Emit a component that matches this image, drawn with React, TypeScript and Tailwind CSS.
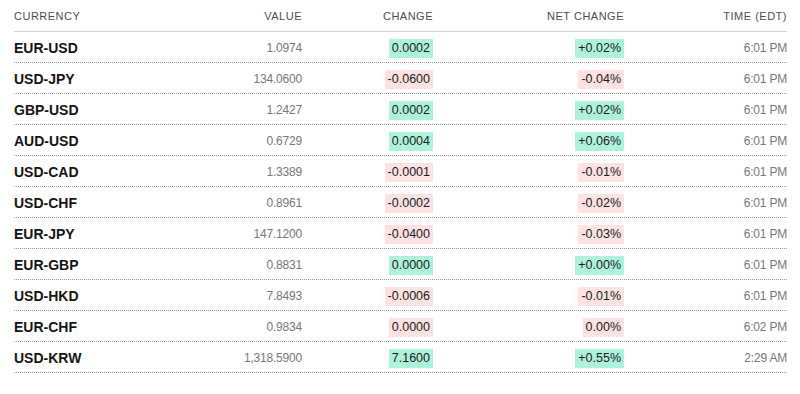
import React from "react";

type Row = {
  pair: string;
  value: string;
  change: string;
  net: string;
  time: string;
  up: boolean;
};

const rows: Row[] = [
  { pair: "EUR-USD", value: "1.0974", change: "0.0002", net: "+0.02%", time: "6:01 PM", up: true },
  { pair: "USD-JPY", value: "134.0600", change: "-0.0600", net: "-0.04%", time: "6:01 PM", up: false },
  { pair: "GBP-USD", value: "1.2427", change: "0.0002", net: "+0.02%", time: "6:01 PM", up: true },
  { pair: "AUD-USD", value: "0.6729", change: "0.0004", net: "+0.06%", time: "6:01 PM", up: true },
  { pair: "USD-CAD", value: "1.3389", change: "-0.0001", net: "-0.01%", time: "6:01 PM", up: false },
  { pair: "USD-CHF", value: "0.8961", change: "-0.0002", net: "-0.02%", time: "6:01 PM", up: false },
  { pair: "EUR-JPY", value: "147.1200", change: "-0.0400", net: "-0.03%", time: "6:01 PM", up: false },
  { pair: "EUR-GBP", value: "0.8831", change: "0.0000", net: "+0.00%", time: "6:01 PM", up: true },
  { pair: "USD-HKD", value: "7.8493", change: "-0.0006", net: "-0.01%", time: "6:01 PM", up: false },
  { pair: "EUR-CHF", value: "0.9834", change: "0.0000", net: "0.00%", time: "6:02 PM", up: false },
  { pair: "USD-KRW", value: "1,318.5900", change: "7.1600", net: "+0.55%", time: "2:29 AM", up: true },
];

const grid = "grid grid-cols-[150px_138px_131px_191px_163px]";

function Badge({ text, up }: { text: string; up: boolean }) {
  return (
    <span
      className={
        "inline-flex h-[19px] items-center px-[3px] text-[12.5px] leading-none text-[#1a1a1a] " +
        (up ? "bg-[#adf2dc]" : "bg-[#fce2e2]")
      }
    >
      {text}
    </span>
  );
}

export default function App() {
  return (
    <div
      className="w-[800px] h-[394px] bg-white pl-[14px] pr-[13px]"
      style={{ fontFamily: '"Liberation Sans", Arial, sans-serif' }}
    >
      <div className={grid + " h-[32px] items-center pt-[2px] border-b border-[#d4d4d4] text-[11px] tracking-[0.5px] text-[#4d4d4d]"}>
        <div>CURRENCY</div>
        <div className="text-right">VALUE</div>
        <div className="text-right">CHANGE</div>
        <div className="text-right">NET CHANGE</div>
        <div className="text-right">TIME (EDT)</div>
      </div>
      {rows.map((r) => (
        <div
          key={r.pair}
          className={grid + " h-[31px] items-center pt-[2px] border-b border-dotted border-[#9a9a9a]"}
        >
          <div className="text-[14px] font-bold text-[#141414]">{r.pair}</div>
          <div className="text-right text-[12px] text-[#777] tracking-[-0.2px]">{r.value}</div>
          <div className="flex justify-end">
            <Badge text={r.change} up={r.up} />
          </div>
          <div className="flex justify-end">
            <Badge text={r.net} up={r.up} />
          </div>
          <div className="text-right text-[12px] text-[#777] tracking-[-0.2px]">{r.time}</div>
        </div>
      ))}
    </div>
  );
}
